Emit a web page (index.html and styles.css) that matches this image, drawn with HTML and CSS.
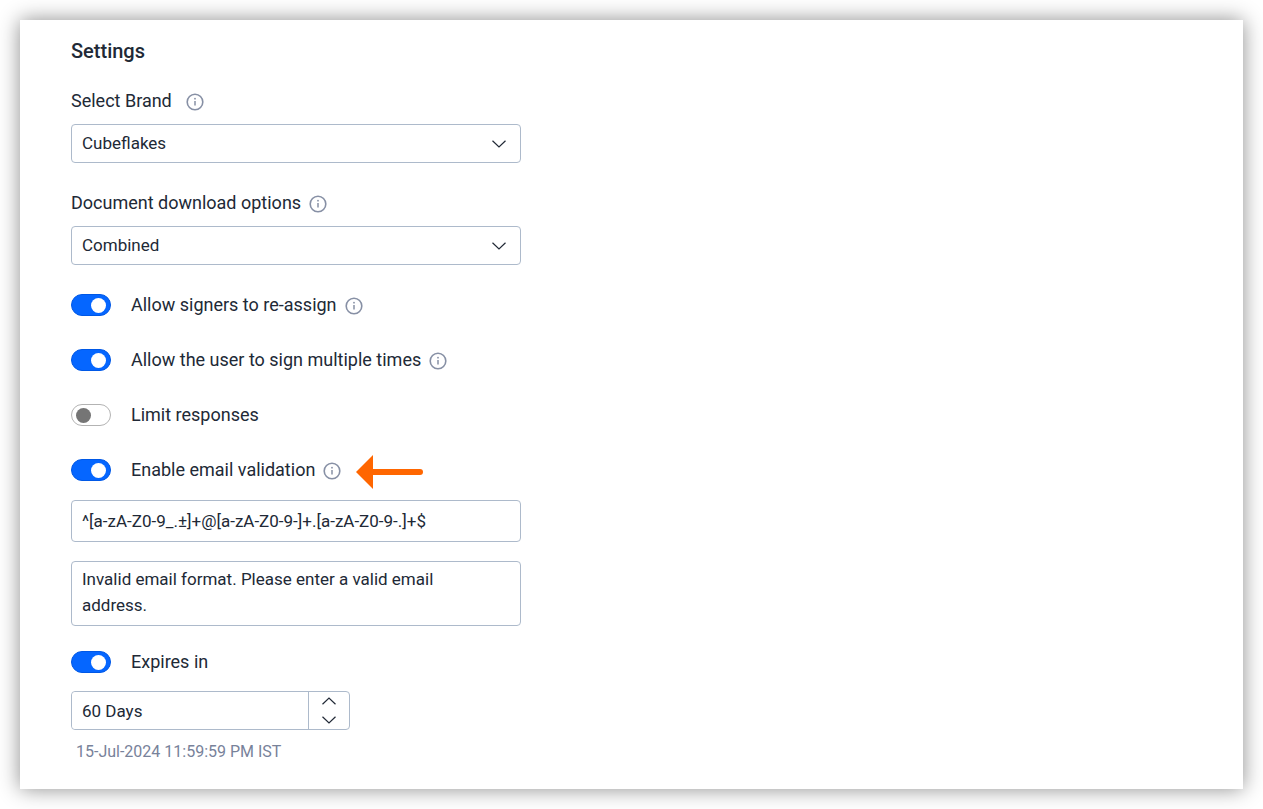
FILE: index.html
```html
<!DOCTYPE html>
<html lang="en">
<head>
    <meta charset="UTF-8">
    <meta name="viewport" content="width=device-width, initial-scale=1.0">
    <title>Settings</title>
    <link rel="stylesheet" href="styles.css">
</head>
<body>
    <!-- Shared icons -->
    <svg class="sprite" aria-hidden="true">
        <symbol id="icon-info" viewBox="0 0 18 18">
            <circle cx="9" cy="9" r="7.8" fill="none" stroke="currentColor" stroke-width="1.6"/>
            <path d="M9 8v4.5" fill="none" stroke="currentColor" stroke-width="1.5"/>
            <circle cx="9" cy="5.7" r="0.9" fill="currentColor"/>
        </symbol>
        <symbol id="icon-down" viewBox="0 0 14 8">
            <path d="M0.5 0.8L7 7l6.500-6.200" fill="none" stroke="currentColor" stroke-width="1.2"/>
        </symbol>
        <symbol id="icon-up" viewBox="0 0 14 8">
            <path d="M0.5 7.200L7 1l6.500 6.200" fill="none" stroke="currentColor" stroke-width="1.2"/>
        </symbol>
    </svg>

    <main class="card">
        <h1>Settings</h1>

        <form class="settings-form">
            <div class="form-group">
                <div class="label-row label-row-wide">
                    <label for="brand">Select Brand</label>
                    <svg class="info"><use href="#icon-info"/></svg>
                </div>
                <div class="select-box">
                    <select id="brand">
                        <option>Cubeflakes</option>
                    </select>
                    <svg class="chevron"><use href="#icon-down"/></svg>
                </div>
            </div>

            <div class="form-group">
                <div class="label-row">
                    <label for="download">Document download options</label>
                    <svg class="info"><use href="#icon-info"/></svg>
                </div>
                <div class="select-box">
                    <select id="download">
                        <option>Combined</option>
                    </select>
                    <svg class="chevron"><use href="#icon-down"/></svg>
                </div>
            </div>

            <div class="toggle-list">
                <div class="label-row">
                    <input type="checkbox" class="toggle" id="reassign" checked>
                    <label for="reassign">Allow signers to re-assign</label>
                    <svg class="info"><use href="#icon-info"/></svg>
                </div>
                <div class="label-row">
                    <input type="checkbox" class="toggle" id="multiple" checked>
                    <label for="multiple">Allow the user to sign multiple times</label>
                    <svg class="info"><use href="#icon-info"/></svg>
                </div>
                <div class="label-row">
                    <input type="checkbox" class="toggle" id="limit">
                    <label for="limit">Limit responses</label>
                </div>
                <div class="label-row">
                    <input type="checkbox" class="toggle" id="validation" checked>
                    <label for="validation">Enable email validation</label>
                    <svg class="info"><use href="#icon-info"/></svg>
                    <svg class="arrow" viewBox="0 0 68 34" aria-hidden="true">
                        <path d="M0 17L17 0v34z" fill="#ff6600"/>
                        <path d="M15 17h49" fill="none" stroke="#ff6600" stroke-width="6" stroke-linecap="round"/>
                    </svg>
                </div>
            </div>

            <div class="validation-fields">
                <input type="text" class="pattern" aria-label="Email pattern" value="^[a-zA-Z0-9_.±]+@[a-zA-Z0-9-]+.[a-zA-Z0-9-.]+$" spellcheck="false">
                <textarea aria-label="Validation message" rows="2" spellcheck="false">Invalid email format. Please enter a valid email address.</textarea>
            </div>

            <div class="expiry">
                <div class="label-row">
                    <input type="checkbox" class="toggle" id="expires" checked>
                    <label for="expires">Expires in</label>
                </div>
                <div class="stepper">
                    <input type="text" aria-label="Expiry days" value="60 Days">
                    <div class="stepper-buttons">
                        <button type="button" aria-label="Increase"><svg class="chevron"><use href="#icon-up"/></svg></button>
                        <button type="button" aria-label="Decrease"><svg class="chevron"><use href="#icon-down"/></svg></button>
                    </div>
                </div>
                <p class="expiry-date">15-Jul-2024 11:59:59 PM IST</p>
            </div>
        </form>
    </main>
</body>
</html>
```
FILE: styles.css
```css
* {
    box-sizing: border-box;
}

body {
    margin: 0;
    padding: 20px;
    min-height: 100vh;
    display: flex;
    background: #fff;
    color: #212936;
    font-family: Roboto, sans-serif;
    font-size: 17px;
    line-height: 26px;
}

.sprite {
    position: absolute;
    width: 0;
    height: 0;
}

.card {
    flex: 1;
    padding: 16px 51px 20px;
    background: #fff;
    box-shadow: 0 0 20px rgba(0, 0, 0, 0.45);
}

h1 {
    margin: 0 0 22px;
    font-size: 20px;
    font-weight: 500;
    line-height: 30px;
}

.settings-form {
    max-width: 450px;
}

.form-group {
    margin-bottom: 27px;
}

.label-row {
    display: flex;
    align-items: center;
    gap: 8px;
    height: 26px;
}

.label-row-wide {
    gap: 14px;
}

.label-row label {
    font-size: 18px;
}

.info {
    width: 18px;
    height: 18px;
    margin-top: 2px;
    color: #8790a5;
}

.chevron {
    width: 14px;
    height: 8px;
    pointer-events: none;
}

/* Text fields */
input[type="text"], select, textarea {
    display: block;
    width: 100%;
    margin: 0;
    padding: 0 10px;
    border: 1px solid #adbacb;
    border-radius: 4px;
    background: #fff;
    color: inherit;
    font: inherit;
}

.select-box {
    display: grid;
    align-items: center;
    margin-top: 10px;
}

.select-box select,
.select-box .chevron {
    grid-area: 1 / 1;
}

.select-box select {
    height: 39px;
    padding-bottom: 2px;
    appearance: none;
}

.select-box .chevron {
    justify-self: end;
    margin-right: 15px;
}

/* Toggles */
.toggle-list {
    display: grid;
    gap: 29px;
}

.toggle {
    appearance: none;
    display: flex;
    align-items: center;
    flex: none;
    width: 40px;
    height: 22px;
    margin: 0 12px 0 0;
    padding: 0 4px;
    border: 1px solid #b3b3b3;
    border-radius: 11px;
    background: #fff;
}

.toggle::before {
    content: "";
    width: 15px;
    height: 15px;
    border-radius: 50%;
    background: #757575;
}

.toggle:checked {
    justify-content: flex-end;
    border-color: #0058e6;
    background: #0566ff;
}

.toggle:checked::before {
    background: #fff;
}

.arrow {
    width: 68px;
    height: 34px;
    flex: none;
    margin: 3px 0 0 7px;
}

.validation-fields {
    display: grid;
    gap: 19px;
    margin: 17px 0 23px;
}

.pattern {
    height: 42px;
}

textarea {
    height: 65px;
    padding: 4px 24px 4px 10px;
    resize: none;
}

/* Expiry */
.stepper {
    display: flex;
    width: 279px;
    height: 39px;
    margin-top: 16px;
    border: 1px solid #adbacb;
    border-radius: 4px;
}

.stepper input[type="text"] {
    flex: 1;
    min-width: 0;
    border: none;
}

.stepper-buttons {
    display: grid;
    width: 41px;
    border-left: 1px solid #adbacb;
}

.stepper-buttons button {
    display: grid;
    place-items: center;
    padding: 0;
    border: none;
    background: none;
    color: inherit;
}

.expiry-date {
    margin: 9px 0 0 5px;
    color: #78829a;
    font-size: 16px;
}
```
